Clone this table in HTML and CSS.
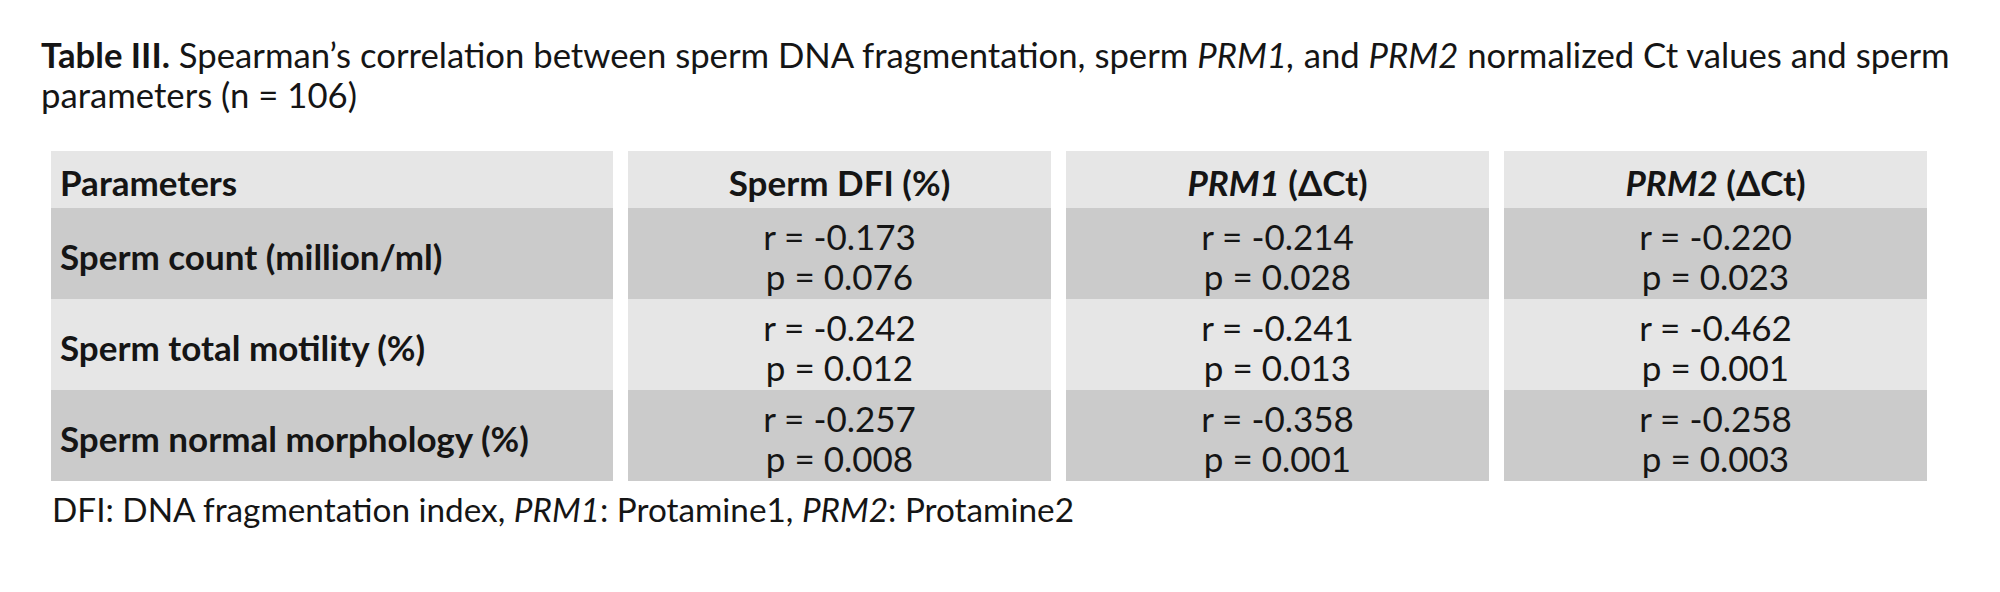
FILE: index.html
```html
<!DOCTYPE html>
<html lang="en">
<head>
<meta charset="utf-8">
<title>Table III</title>
<link rel="stylesheet" href="styles.css">
</head>
<body>
<div class="page">
  <p class="caption"><b>Table III.</b> Spearman’s correlation between sperm DNA fragmentation, sperm <i>PRM1,</i> and <i>PRM2</i> normalized Ct values and sperm<br>parameters (n = 106)</p>
  <div class="table">
    <div class="cell head first"><span>Parameters</span></div>
    <div class="cell head"><span>Sperm DFI (%)</span></div>
    <div class="cell head"><span><i>PRM1</i> (ΔCt)</span></div>
    <div class="cell head"><span><i>PRM2</i> (ΔCt)</span></div>

    <div class="cell dark first"><span>Sperm count (million/ml)</span></div>
    <div class="cell dark val"><span>r = -0.173<br>p = 0.076</span></div>
    <div class="cell dark val"><span>r = -0.214<br>p = 0.028</span></div>
    <div class="cell dark val"><span>r = -0.220<br>p = 0.023</span></div>

    <div class="cell light first"><span>Sperm total motility (%)</span></div>
    <div class="cell light val"><span>r = -0.242<br>p = 0.012</span></div>
    <div class="cell light val"><span>r = -0.241<br>p = 0.013</span></div>
    <div class="cell light val"><span>r = -0.462<br>p = 0.001</span></div>

    <div class="cell dark first"><span>Sperm normal morphology (%)</span></div>
    <div class="cell dark val"><span>r = -0.257<br>p = 0.008</span></div>
    <div class="cell dark val"><span>r = -0.358<br>p = 0.001</span></div>
    <div class="cell dark val"><span>r = -0.258<br>p = 0.003</span></div>
  </div>
  <p class="note">DFI: DNA fragmentation index, <i>PRM1</i>: Protamine1, <i>PRM2</i>: Protamine2</p>
</div>
</body>
</html>
```
FILE: styles.css
```css
html, body {
  margin: 0;
  padding: 0;
  background: #ffffff;
}
body {
  font-family: "Lato", "Liberation Sans", sans-serif;
  color: #151515;
  line-height: 40px;
}
.page {
  padding: 35px 0 0 41px;
}
.caption {
  margin: 0;
  font-size: 34.7px;
}
.caption b {
  font-weight: 700;
}
.table {
  margin: 36px 0 0 10px;
  display: grid;
  grid-template-columns: 562px 423px 423px 423px;
  column-gap: 15px;
  width: 1876px;
  font-size: 35px;
}
.cell {
  box-sizing: border-box;
  display: flex;
  align-items: center;
  justify-content: center;
  text-align: center;
}
.head {
  height: 57px;
  padding-top: 5px;
  background: #e6e6e6;
  font-weight: 700;
}
.first {
  justify-content: flex-start;
  text-align: left;
  padding-left: 9px;
  font-weight: 700;
}
.dark {
  background: #cbcbcb;
  height: 91px;
  padding-top: 4px;
}
.light {
  background: #e6e6e6;
  height: 91px;
  padding-top: 4px;
}
.note {
  margin: 8px 0 0 11px;
  font-size: 33.3px;
}
```
